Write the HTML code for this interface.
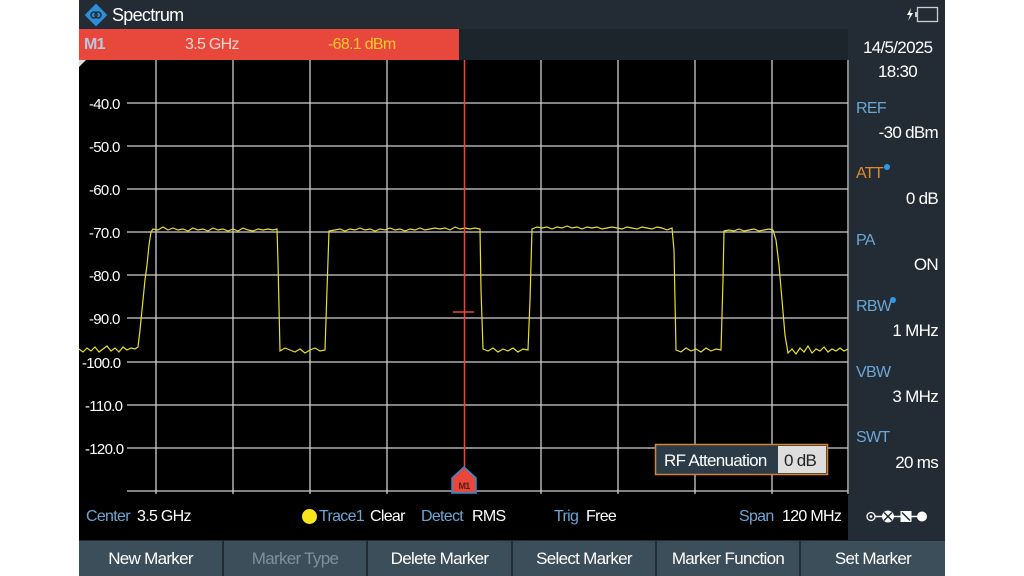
<!DOCTYPE html>
<html><head><meta charset="utf-8"><style>
*{margin:0;padding:0;box-sizing:border-box}
body{width:1024px;height:576px;background:#fff;position:relative;overflow:hidden;font-family:"Liberation Sans",sans-serif;font-size:16px;letter-spacing:-0.7px;color:#fff}
.a{position:absolute;white-space:nowrap;line-height:1}
.r{text-align:right}
.bl{color:#6aa6d6}
.btn{position:absolute;top:541px;height:35px;background:#3c4e5a;text-align:center;line-height:35px;font-size:17px;color:#fff}
</style></head><body>
<div class="a" style="left:79px;top:0;width:866px;height:576px;background:#232c34"></div>
<div class="a" style="left:79px;top:29px;width:769px;height:31px;background:#1d252c"></div>
<div class="a" style="left:79px;top:29px;width:380px;height:31px;background:#e8473b"></div>
<svg class="a" style="left:84px;top:3px" width="24" height="24" viewBox="0 0 24 24"><rect x="4" y="4" width="16" height="16" transform="rotate(45 12 12)" fill="#2a8fd6"/><circle cx="10" cy="12" r="3" fill="none" stroke="#232c34" stroke-width="1.5"/><circle cx="14" cy="12" r="3" fill="none" stroke="#232c34" stroke-width="1.5"/></svg>
<div class="a" style="left:112px;top:6px;font-size:18px">Spectrum</div>
<svg class="a" style="left:903px;top:6px" width="38" height="17"><path d="M8 2 L4 9 H7 L5 15 L10 7 H7 Z" fill="#fff"/><rect x="14.5" y="1.5" width="20" height="14" fill="none" stroke="#ccc" stroke-width="1.3"/><rect x="12" y="6" width="2.5" height="5" fill="#ccc"/></svg>
<div class="a" style="left:84px;top:37px;color:#b9c8e0;font-size:16px;font-weight:bold">M1</div>
<div class="a" style="left:185px;top:37px;color:#ffd8d0">3.5 GHz</div>
<div class="a" style="left:328px;top:37px;color:#ffc928">-68.1 dBm</div>

<svg class="a" style="left:79px;top:60px" width="770" height="435" viewBox="79 60 770 435">
<rect x="79" y="60" width="770" height="435" fill="#000"/>
<path d="M79 60 L86 60 L79 67Z" fill="#ddd"/>
<g stroke="#cfcfcf" stroke-width="1.3">
<path d="M156 60V494M233 60V494M310 60V494M387 60V494M541 60V494M618 60V494M695 60V494M772 60V494M848 60V494"/>
<path d="M127 103H848M127 146H848M127 189H848M127 232H848M127 275H848M127 318H848M127 362H848M127 405H848M127 448H848M127 491H848"/>
</g>
<g fill="#fff" font-size="15" font-family="Liberation Sans" letter-spacing="-0.7">
<text x="89" y="109">-40.0</text><text x="89" y="152">-50.0</text><text x="89" y="195">-60.0</text><text x="89" y="238">-70.0</text><text x="89" y="281">-80.0</text><text x="89" y="324">-90.0</text><text x="82" y="368">-100.0</text><text x="85" y="411">-110.0</text><text x="85" y="454">-120.0</text>
</g>
<polyline fill="none" stroke="#e6e02a" stroke-width="1.2" points="79,349 83,352 87,348 91,351 95,347 99,352 103,349 107,346 111,351 115,348 119,352 123,347 127,350 131,348 135,349 138,347 140,330 142,310 145,280 147,265 149,245 151,232 153,229 158,230 163,227 168,230 173,228 178,230 183,229 188,231 193,228 198,230 203,229 208,231 213,228 218,230 223,229 228,231 233,229 238,231 243,228 248,230 253,231 258,229 263,230 268,229 273,230 277,229 278,262 280,351 285,348 290,350 295,352 300,349 305,353 310,350 315,348 320,351 325,350 327,290 329,231 335,230 340,229 345,231 350,229 355,230 360,228 365,230 370,229 375,231 380,229 385,230 390,228 395,230 400,229 405,231 410,229 415,230 420,228 425,230 430,229 435,228 440,229 445,228 450,230 455,227 460,229 465,228 470,229 475,228 480,229 481,290 483,349 488,351 493,348 498,352 503,349 508,351 513,348 518,352 523,349 528,350 530,300 532,229 537,227 542,228 547,227 552,229 557,227 562,228 567,226 572,228 577,227 582,229 587,227 592,228 597,227 602,229 607,228 612,227 617,228 622,229 627,227 632,228 637,229 642,227 647,228 652,229 657,227 662,228 667,230 672,228 674,250 676,350 681,352 686,348 691,351 696,349 701,352 706,348 711,351 716,349 721,350 723,280 724,231 729,230 734,231 739,229 744,231 749,230 754,229 759,231 764,230 769,229 773,230 776,240 779,265 782,300 785,335 788,353 792,349 796,354 800,348 804,352 808,346 812,353 816,349 820,351 824,347 828,352 832,349 836,351 840,348 844,351 848,349"/>
<path d="M464.5 60V470" stroke="#e8473b" stroke-width="1.5"/>
<path d="M453 312H474" stroke="#e8473b" stroke-width="1.5"/>
<path d="M452 478 L464 467 L476 478 V493 H452 Z" fill="#e8473b" stroke="#2a8fd6" stroke-width="1.5"/>
<text x="464" y="489" fill="#5a1a10" font-size="9" font-weight="bold" text-anchor="middle" font-family="Liberation Sans">M1</text>
<rect x="655.5" y="444.5" width="172" height="30" fill="#2b3c48" stroke="#d9822b" stroke-width="1.5"/>
<rect x="778" y="446" width="48" height="27" fill="#ddd"/>
<text x="664" y="466" fill="#fff" font-size="17" font-family="Liberation Sans" letter-spacing="-0.7">RF Attenuation</text>
<text x="784" y="466" fill="#222" font-size="17" font-family="Liberation Sans" letter-spacing="-0.7">0 dB</text>
</svg>

<div class="a" style="left:79px;top:494px;width:769px;height:46px;background:#000"></div>
<div class="a bl" style="left:86px;top:509px">Center</div><div class="a" style="left:137px;top:509px">3.5 GHz</div>
<div class="a" style="left:302px;top:509px;width:15px;height:15px;border-radius:50%;background:#f7e41c"></div>
<div class="a bl" style="left:319px;top:509px">Trace1</div><div class="a" style="left:370px;top:509px">Clear</div>
<div class="a bl" style="left:421px;top:509px">Detect</div><div class="a" style="left:472px;top:509px">RMS</div>
<div class="a bl" style="left:554px;top:509px">Trig</div><div class="a" style="left:586px;top:509px">Free</div>
<div class="a bl" style="left:739px;top:509px">Span</div><div class="a" style="left:782px;top:509px">120 MHz</div>
<svg class="a" style="left:864px;top:508px" width="66" height="17"><path d="M8 8.5H58" stroke="#fff" stroke-width="1.5"/><circle cx="7" cy="8.5" r="4" fill="#232c34" stroke="#fff" stroke-width="1.3"/><circle cx="7" cy="8.5" r="1.3" fill="#fff"/><circle cx="24" cy="8.5" r="6" fill="#fff"/><path d="M20 4.5L28 12.5M28 4.5L20 12.5" stroke="#232c34" stroke-width="1.5"/><rect x="36.5" y="3" width="11" height="11" fill="#fff"/><path d="M38 4.5L46 12.5" stroke="#232c34" stroke-width="1.5"/><circle cx="58" cy="8.5" r="5" fill="#fff"/></svg>

<div class="a" style="left:863px;top:39px;font-size:17px">14/5/2025</div>
<div class="a" style="left:878px;top:63px;font-size:17px">18:30</div>
<div class="a bl" style="left:856px;top:101px">REF</div><div class="a r" style="left:850px;width:88px;top:124px;font-size:17px">-30 dBm</div>
<div class="a" style="left:856px;top:166px;color:#e08a2a">ATT</div><div class="a" style="left:884px;top:164px;width:6px;height:6px;border-radius:50%;background:#2a9ae6"></div><div class="a r" style="left:850px;width:88px;top:190px;font-size:17px">0 dB</div>
<div class="a bl" style="left:856px;top:233px">PA</div><div class="a r" style="left:850px;width:88px;top:256px;font-size:17px">ON</div>
<div class="a bl" style="left:856px;top:299px">RBW</div><div class="a" style="left:890px;top:297px;width:6px;height:6px;border-radius:50%;background:#2a9ae6"></div><div class="a r" style="left:850px;width:88px;top:322px;font-size:17px">1 MHz</div>
<div class="a bl" style="left:856px;top:365px">VBW</div><div class="a r" style="left:850px;width:88px;top:388px;font-size:17px">3 MHz</div>
<div class="a bl" style="left:856px;top:430px">SWT</div><div class="a r" style="left:850px;width:88px;top:454px;font-size:17px">20 ms</div>

<div class="btn" style="left:79px;width:143px">New Marker</div>
<div class="btn" style="left:224px;width:142px;color:#80909a">Marker Type</div>
<div class="btn" style="left:368px;width:143px">Delete Marker</div>
<div class="btn" style="left:513px;width:142px">Select Marker</div>
<div class="btn" style="left:657px;width:142px">Marker Function</div>
<div class="btn" style="left:801px;width:144px">Set Marker</div>
</body></html>
